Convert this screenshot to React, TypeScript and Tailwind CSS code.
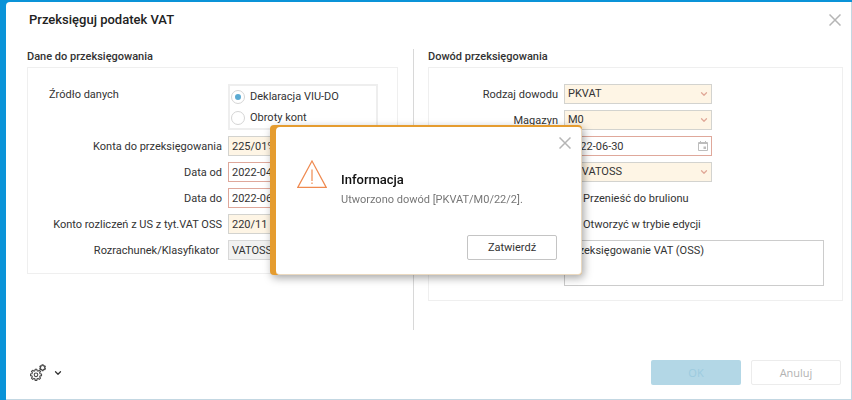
import React, { useState } from 'react';
import { ChevronDown } from 'lucide-react';

const FIELD = 'h-5 w-full rounded-none border px-[3px] text-[11px] leading-4 text-[#333333] outline-none';

const CloseIcon = () => (
    <svg width="12" height="12" viewBox="0 0 12 12" fill="none" stroke="#b5b5b5" strokeWidth="1.5">
        <path d="M0.5 0.5L11.5 11.5M11.5 0.5L0.5 11.5" />
    </svg>
);

const CalendarIcon = () => (
    <svg width="10" height="10" viewBox="0 0 10 10" fill="none" stroke="#bdbdbd" className="pointer-events-none absolute right-1 top-[5px]">
        <path d="M0.5 1.5H9.5V9.5H0.5ZM0.5 2.5H9.5M2.5 0V1.5M7.5 0V1.5" />
        <path d="M5.5 5.5H8V8H5.5Z" fill="#bdbdbd" stroke="none" />
    </svg>
);

const WarningIcon = () => (
    <svg width="30" height="28" viewBox="0 0 30 28" fill="none" stroke="#ef8a50" className="mt-[33px] shrink-0">
        <path d="M15 1L29.2 27.4H0.8Z" strokeWidth="1.2" />
        <path d="M15 9.5V21M15 22.6V24" strokeWidth="1.2" />
    </svg>
);

// Builds a toothed wheel outline around (cx, cy)
const gearPath = (cx: number, cy: number, outer: number, inner: number, teeth: number) => {
    const points: string[] = [];
    const step = (Math.PI * 2) / teeth;
    for (let i = 0; i < teeth; i++) {
        const a = i * step - Math.PI / 2;
        [[-0.33, inner], [-0.2, outer], [0.2, outer], [0.33, inner]].forEach(([k, r]) => {
            points.push(`${(cx + Math.cos(a + k * step) * r).toFixed(2)} ${(cy + Math.sin(a + k * step) * r).toFixed(2)}`);
        });
    }
    return `M${points.join('L')}Z`;
};

const GearsIcon = () => (
    <svg width="17" height="17" viewBox="0 0 17 17" fill="none" stroke="#4a4a4a" strokeLinejoin="round">
        <path d={gearPath(6, 10.8, 5.6, 4.2, 8)} strokeWidth="1.1" />
        <circle cx="6" cy="10.8" r="1.8" strokeWidth="1.1" />
        <path d={gearPath(12.6, 3.7, 2.9, 2.1, 6)} strokeWidth="1.2" />
    </svg>
);

interface RowProps {
    id: string;
    label: string;
    children: React.ReactNode;
}

const Row: React.FC<RowProps> = ({ id, label, children }) => (
    <>
        <label htmlFor={id} className="pt-[2px] text-right whitespace-pre leading-[18px]">{label}</label>
        <div className="relative">{children}</div>
    </>
);

const SelectField = ({ id, value }: { id: string; value: string }) => (
    <>
        <select id={id} className={`${FIELD} block appearance-none border-[#d3d3cf] bg-[#fef5e5]`}>
            <option>{value}</option>
        </select>
        <ChevronDown size={10} strokeWidth={3} className="pointer-events-none absolute right-[3px] top-[5px] text-[#e0a898]" />
    </>
);

const DateField = ({ id, value }: { id: string; value: string }) => (
    <>
        <input id={id} type="text" defaultValue={value} className={`${FIELD} block border-[#dfa89b] bg-white`} />
        <CalendarIcon />
    </>
);

const SOURCES = ['Deklaracja VIU-DO', 'Obroty kont'];
const OPTIONS = ['Przenieść do brulionu', 'Otworzyć w trybie edycji'];

export default function App() {
    const [source, setSource] = useState(SOURCES[0]);
    const [showInfo, setShowInfo] = useState(true);

    return (
        <div className="flex min-h-screen bg-[#0a93d8] pl-[6px] pt-[2px] font-['Roboto',sans-serif] text-[11px] text-[#333333]">
            <div className="flex grow flex-col rounded-tl border-b border-r border-[#c3d7e2] bg-white">
                <header className="flex h-9 items-center justify-between pl-[23px] pr-[10px]">
                    <h1 className="text-[13px] font-medium text-[#222222]">Przeksięguj podatek VAT</h1>
                    <button type="button" aria-label="Zamknij okno"><CloseIcon /></button>
                </header>

                <main className="flex pl-[21px] pr-2 pt-[11px]">
                    <section className="w-[371px] shrink-0">
                        <h2 className="h-[18px] text-[11px] font-medium leading-4">Dane do przeksięgowania</h2>
                        <div className="grid grid-cols-[194px_150px] gap-x-[6px] gap-y-[6px] border border-[#efefef] pb-[13px] pt-4">
                            <span id="source" className="pl-[21px] pt-[2px] leading-[18px]">Źródło danych</span>
                            <div role="radiogroup" aria-labelledby="source" className="flex h-[46px] flex-col justify-between border-2 border-[#eeeeee] px-[2px]">
                                {SOURCES.map((name) => (
                                    <label key={name} className="flex items-center gap-[6px] leading-[21px]">
                                        <input
                                            type="radio"
                                            name="source"
                                            checked={source === name}
                                            onChange={() => setSource(name)}
                                            className="size-3 appearance-none rounded-full bg-white outline outline-[#d5d5d5] checked:border-[3px] checked:border-white checked:bg-[#5baad2]"
                                        />
                                        {name}
                                    </label>
                                ))}
                            </div>
                            <Row id="accounts" label="Konta do przeksięgowania">
                                <input id="accounts" defaultValue="225/01%" className={`${FIELD} block border-[#d3d3cf] bg-[#fef5e5]`} />
                            </Row>
                            <Row id="from" label="Data od"><DateField id="from" value="2022-04-01" /></Row>
                            <Row id="to" label="Data do"><DateField id="to" value="2022-06-30" /></Row>
                            <Row id="settlement" label="Konto rozliczeń z US z tyt.VAT OSS">
                                <input id="settlement" defaultValue="220/11" className={`${FIELD} block border-[#d3d3cf] bg-[#fef5e5]`} />
                            </Row>
                            <Row id="classifier" label={'Rozrachunek/Klasyfikator '}>
                                <input id="classifier" readOnly defaultValue="VATOSS" className={`${FIELD} block border-[#d8d8d8] bg-[#f1f1f1]`} />
                            </Row>
                        </div>
                    </section>

                    <div className="ml-[15px] mr-[14px] h-[281px] w-px shrink-0 bg-[#d8d8d8]" />

                    <section className="grow">
                        <h2 className="h-[18px] text-[11px] font-medium leading-4">Dowód przeksięgowania</h2>
                        <div className="grid grid-cols-[129px_148px_1fr] gap-x-[6px] gap-y-[6px] border border-[#efefef] pb-[14px] pr-[18px] pt-4">
                            <div className="col-span-2 grid grid-cols-subgrid gap-y-[6px]">
                                <Row id="kind" label="Rodzaj dowodu"><SelectField id="kind" value="PKVAT" /></Row>
                                <Row id="store" label="Magazyn"><SelectField id="store" value="M0" /></Row>
                                <Row id="date" label="Data"><DateField id="date" value="2022-06-30" /></Row>
                                <Row id="register" label="Rejestr"><SelectField id="register" value="PKVATOSS" /></Row>
                                {OPTIONS.map((name) => (
                                    <label key={name} className="col-start-2 flex items-center gap-[7px] whitespace-nowrap pt-[2px] leading-[18px]">
                                        <input type="checkbox" className="size-3 appearance-none border border-[#cccccc] checked:bg-[#5baad2]" />
                                        {name}
                                    </label>
                                ))}
                            </div>
                            <label htmlFor="note" className="col-start-1 text-right leading-5">Opis</label>
                            <textarea
                                id="note"
                                defaultValue="Przeksięgowanie VAT (OSS)"
                                className="col-span-2 block h-[46px] resize-none border border-[#cccccc] px-[3px] leading-5 outline-none"
                            />
                        </div>
                    </section>
                </main>

                <footer className="mt-auto flex items-center gap-[10px] pb-[14px] pl-6 pr-[10px] font-['Open_Sans',sans-serif] text-[11px]">
                    <button type="button" aria-label="Ustawienia" className="mr-auto flex items-center gap-[6px]">
                        <GearsIcon />
                        <ChevronDown size={10} strokeWidth={3} className="text-[#333333]" />
                    </button>
                    <button type="button" disabled className="h-[25px] w-[90px] rounded-xs bg-[#b3d7e6] pt-[2px] text-[#9ccbdf]">OK</button>
                    <button type="button" disabled className="h-[25px] w-[90px] rounded-xs border border-[#ececec] pt-[2px] text-[#b3b3b3]">Anuluj</button>
                </footer>
            </div>

            {showInfo && (
                <div className="fixed inset-0 flex items-center justify-center">
                    <div
                        role="alertdialog"
                        aria-labelledby="info-title"
                        className="w-[312px] rounded bg-[#e59c2f] pl-[6px] pt-[2px] shadow-[2px_3px_8px_rgba(0,0,0,0.35)]"
                    >
                        <div className="rounded rounded-tr-sm border-b border-r border-[#ead9c0] bg-white pb-[14px] pl-[21px] pr-[10px]">
                            <div className="relative flex gap-[14px]">
                                <WarningIcon />
                                <div className="pt-[43px]">
                                    <h2 id="info-title" className="text-[13px] font-medium leading-5 text-[#111111]">Informacja</h2>
                                    <p className="text-[11px] leading-5 text-[#777777]">Utworzono dowód [PKVAT/M0/22/2].</p>
                                </div>
                                <button type="button" aria-label="Zamknij" onClick={() => setShowInfo(false)} className="absolute right-0 top-[10px]">
                                    <CloseIcon />
                                </button>
                            </div>
                            <div className="flex justify-end pr-[14px] pt-[25px]">
                                <button type="button" onClick={() => setShowInfo(false)} className="h-[25px] w-[90px] rounded-xs border border-[#c4c4c4] pt-[2px] text-[11px]">
                                    Zatwierdź
                                </button>
                            </div>
                        </div>
                    </div>
                </div>
            )}
        </div>
    );
}
